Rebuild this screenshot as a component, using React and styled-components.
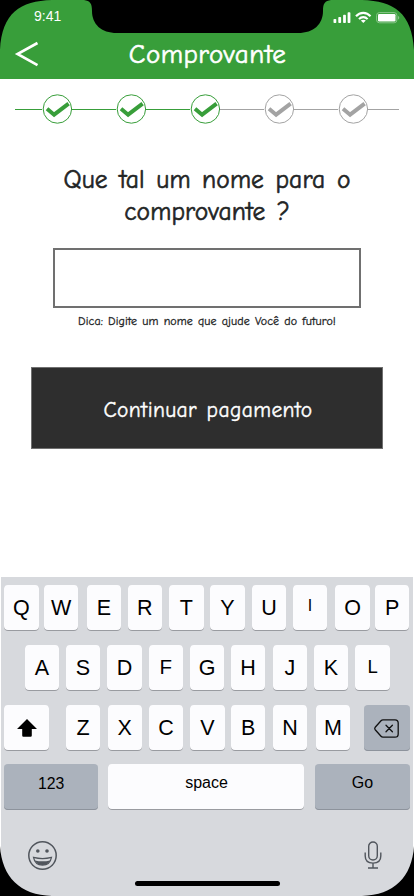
import React from "react";
import styled, { createGlobalStyle } from "styled-components";

const GREEN = "#389e3a";
const GRAY = "#a3a3a3";

const GlobalStyle = createGlobalStyle`
  * { box-sizing: border-box; }
  body { margin: 0; background: #fff; }
`;

const hand = `"Comic Neue", Inter, sans-serif`;

const Screen = styled.div`
  position: relative;
  width: 414px;
  height: 896px;
  overflow: hidden;
  background: #fff;
  display: flex;
  flex-direction: column;
  font-family: "Liberation Sans", sans-serif;
`;

const Header = styled.header`
  height: 79px;
  flex: none;
  background: ${GREEN};
  color: #fff;
`;

const StatusBar = styled.div`
  height: 33px;
  padding: 7px 13px 0 34px;
  display: flex;
  justify-content: space-between;
`;

const Clock = styled.span`
  font-size: 14px;
  line-height: 18px;
`;

const StatusIcons = styled.svg`
  width: 68px;
  height: 14px;
  margin-top: 4px;
`;

const TitleBar = styled.div`
  height: 46px;
  display: grid;
  grid-template-columns: 54px 1fr 53px;
  align-items: center;
`;

const BackButton = styled.button`
  border: 0;
  padding: 0 0 4px 14px;
  background: none;
  display: flex;
`;

const Title = styled.h1`
  margin: 0;
  padding-bottom: 2px;
  text-align: center;
  font: 400 27px/32px ${hand};
  letter-spacing: 0.5px;
  -webkit-text-stroke: 0.6px currentColor;
`;

const Stepper = styled.div`
  height: 30px;
  margin: 15px 15px 0;
  display: flex;
  align-items: center;
`;

const Line = styled.span`
  height: 1px;
  flex: ${(p) => p.$grow} 1 0;
  background: ${(p) => (p.$done ? GREEN : GRAY)};
`;

const StepMark = styled.svg`
  width: 30px;
  height: 30px;
  flex: none;
  color: ${(p) => (p.$done ? GREEN : GRAY)};
`;

const Form = styled.main`
  height: 453px;
  flex: none;
  display: flex;
  flex-direction: column;
  align-items: center;
`;

const Question = styled.h2`
  margin: 40px 0 0;
  color: #222424;
  text-align: center;
  white-space: pre;
  font: 400 25.5px/32px ${hand};
  letter-spacing: 0.1px;
  word-spacing: 2.9px;
  -webkit-text-stroke: 0.6px currentColor;
`;

const NameInput = styled.input`
  width: 308px;
  height: 60px;
  margin: 20px 0 0;
  border: 2px solid #707070;
  border-radius: 0;
  background: #fff;
  outline: none;
`;

const Hint = styled.p`
  margin: 6px 0 1px;
  color: #222424;
  white-space: nowrap;
  font: 400 12px/14px ${hand};
  letter-spacing: 0.1px;
  word-spacing: 1px;
  -webkit-text-stroke: 0.3px currentColor;
`;

const PayButton = styled.button`
  width: 352px;
  height: 82px;
  margin: 38px 1px 0 0;
  padding: 4px 0 0 3px;
  border: 1px solid #707070;
  background: #2e2e2e;
  color: #fff;
  font: 400 21.5px/28px ${hand};
  letter-spacing: 0.4px;
  word-spacing: 2px;
  -webkit-text-stroke: 0.4px currentColor;
`;

const Keyboard = styled.section`
  height: 319px;
  margin: 0 1px;
  padding-top: 8px;
  background: #d7d9dd;
`;

const KeyRow = styled.div`
  height: 46px;
  margin-bottom: ${(p) => p.$after ?? 14}px;
  padding-left: ${(p) => p.$left}px;
  display: flex;
`;

const Key = styled.button`
  width: ${(p) => p.$width ?? 34.4}px;
  height: 46px;
  flex: none;
  margin: 0 ${(p) => p.$gap ?? 0}px 0 0;
  padding: 0 0 ${(p) => p.$lift ?? 0}px;
  border: 0;
  border-radius: 4px;
  display: flex;
  align-items: center;
  justify-content: center;
  background: ${(p) => (p.$dark ? "#abb2bc" : "#fcfcfe")};
  box-shadow: inset 0 -1px 0 ${(p) => (p.$dark ? "#8d939c" : "#999ba0")};
  color: #000;
  font: 400 ${(p) => p.$size ?? 21.5}px/24px "Liberation Sans", sans-serif;
`;

const KeyboardFooter = styled.div`
  height: 44px;
  padding: 0 31px 0 26px;
  display: flex;
  align-items: center;
  justify-content: space-between;
`;

const HomeIndicator = styled.div`
  width: 145px;
  height: 5px;
  margin: 4px auto 0;
  border-radius: 3px;
  background: #000;
`;

const DeviceFrame = styled.svg`
  position: absolute;
  inset: 0;
  pointer-events: none;
`;

function Step({ done }) {
  return (
    <StepMark viewBox="0 0 30 30" fill="none" stroke="currentColor" $done={done}>
      <circle cx="15.4" cy="15" r="14.2" fill="#fff" />
      <path d="M5 14.8 L12.1 20.7 L26.6 9.7" strokeWidth="4" />
    </StepMark>
  );
}

const rows = [
  { left: 3.2, keys: [["Q", 5.4], ["W", 8.3], ["E", 6.6], ["R", 7.2], ["T", 6.6], ["Y", 7.3], ["U", 6.6], ["I", 8.1, 16, 5], ["O", 5.3], ["P", 0]] },
  { left: 23.7, keys: [["A", 6.6], ["S", 7.3], ["D", 6.8], ["F", 7, 20.5, 2], ["G", 6.5], ["H", 7.4], ["J", 6.7], ["K", 7.4], ["L", 0, 18.5, 2]] },
];

const bottomLetters = [["Z", 7.4], ["X", 6.8], ["C", 7], ["V", 6.5], ["B", 7.4], ["N", 8.5], ["M", 13.8]];

function Letters({ keys }) {
  return keys.map(([label, gap, size, lift]) => (
    <Key key={label} $gap={gap} $size={size} $lift={lift}>{label}</Key>
  ));
}

export default function App() {
  return (
    <Screen>
      <GlobalStyle />
      <Header>
        <StatusBar>
          <Clock>9:41</Clock>
          <StatusIcons viewBox="0 0 68 14" fill="#fff">
            <rect x="0.5" y="8" width="2.8" height="4" rx="0.8" />
            <rect x="5.3" y="6" width="2.8" height="6" rx="0.8" />
            <rect x="10.1" y="3.8" width="2.8" height="8.2" rx="0.8" />
            <rect x="14.6" y="1.2" width="2.8" height="10.8" rx="0.8" />
            <g fill="none" stroke="#fff" strokeWidth="2.1">
              <path d="M23 5.3 C27 0.7 33.5 0.7 37.5 5.3" />
              <path d="M26 8.1 C28.4 5.5 32.2 5.5 34.6 8.1" />
            </g>
            <path d="M27.8 9.6 C29.2 8.3 31.4 8.3 32.8 9.6 L30.3 12 Z" />
            <rect x="43.6" y="1.6" width="20.3" height="10.2" rx="2.8" fill="none" stroke="#88c589" />
            <rect x="45" y="3" width="17.5" height="7.4" rx="1.2" />
            <path d="M65 5 C66.7 5.3 66.7 8.2 65 8.5 Z" fill="#88c589" />
          </StatusIcons>
        </StatusBar>
        <TitleBar>
          <BackButton aria-label="Voltar">
            <svg width="26" height="26" viewBox="0 0 26 26" fill="none" stroke="#fff" strokeWidth="2.6">
              <path d="M23.5 2 L3.5 13 L23.5 24.2" />
            </svg>
          </BackButton>
          <Title>Comprovante</Title>
        </TitleBar>
      </Header>
      <Stepper>
        <Line $done $grow={27.3} />
        <Step done />
        <Line $done $grow={44} />
        <Step done />
        <Line $done $grow={44} />
        <Step done />
        <Line $grow={44} />
        <Step />
        <Line $grow={44} />
        <Step />
        <Line $grow={30.9} />
      </Stepper>
      <Form>
        <Question>{"Que tal um nome para o\ncomprovante ?"}</Question>
        <NameInput aria-label="Nome do comprovante" />
        <Hint>Dica: Digite um nome que ajude Você do futuro!</Hint>
        <PayButton>Continuar pagamento</PayButton>
      </Form>
      <Keyboard>
        {rows.map((row) => (
          <KeyRow key={row.left} $left={row.left}>
            <Letters keys={row.keys} />
          </KeyRow>
        ))}
        <KeyRow $left={3.2} $after={13}>
          <Key $width={45} $gap={16.6} aria-label="Shift">
            <svg width="20" height="18" viewBox="0 0 20 18">
              <path d="M10 0 L20 10 H14.8 V16.5 Q14.8 17.7 13.6 17.7 H6.4 Q5.2 17.7 5.2 16.5 V10 H0 Z" />
            </svg>
          </Key>
          <Letters keys={bottomLetters} />
          <Key $dark $width={46} aria-label="Apagar">
            <svg width="25" height="19" viewBox="0 0 25 19" fill="none" stroke="#111" strokeWidth="1.3" strokeLinecap="round" strokeLinejoin="round">
              <path d="M9 .8 H21 Q24.2 .8 24.2 4 V15 Q24.2 18.2 21 18.2 H9 Q7.8 18.2 7 17.3 L1.2 10.7 Q.3 9.5 1.2 8.3 L7 1.7 Q7.8 .8 9 .8Z" />
              <path d="M12 6.2 L18.4 12.8 M18.4 6.2 L12 12.8" />
            </svg>
          </Key>
        </KeyRow>
        <KeyRow $left={3.2} $after={23.4}>
          <Key $dark $width={94} $gap={10.3} $size={15.8} $lift={7}>123</Key>
          <Key $width={196} $gap={10.5} $size={16} $lift={9}>space</Key>
          <Key $dark $width={95} $size={16} $lift={9}>Go</Key>
        </KeyRow>
        <KeyboardFooter>
          <svg width="31" height="31" viewBox="0 0 31 31" fill="none" stroke="#50555c" strokeWidth="1.5">
            <circle cx="15.5" cy="15.5" r="13.7" />
            <g fill="#50555c" stroke="none">
              <circle cx="10.8" cy="11" r="1.8" />
              <circle cx="20" cy="11" r="1.8" />
              <path d="M8 20.4 Q15.5 22.3 23 20.4 Q20.5 25 15.5 25 Q10.5 25 8 20.4Z" />
            </g>
            <path d="M6.5 17.4 Q15.5 19.7 24.5 17.4 Q23 25.2 15.5 25.2 Q8 25.2 6.5 17.4Z" strokeWidth="1.2" />
          </svg>
          <svg width="18" height="28" viewBox="0 0 18 28" fill="none" stroke="#50555c" strokeWidth="1.4">
            <rect x="4.7" y="1" width="8.6" height="18" rx="4.3" />
            <path d="M1.2 11.5 V15 Q1.2 22.1 9 22.1 Q16.8 22.1 16.8 15 V11.5 M9 22 V27 M4 27 H14" />
          </svg>
        </KeyboardFooter>
        <HomeIndicator />
      </Keyboard>
      <DeviceFrame width="414" height="896" viewBox="0 0 414 896">
        <path d="M0 0 H52 C20 1 2 13 0 50 Z M414 0 H362 C394 1 412 13 414 50 Z" />
        <path d="M84 0 C90 1 92 3 92 11 C92 24 101 33 117 33 H298 C314 33 323 24 323 11 C323 3 325 1 331 0 Z" />
        <path d="M0 846 C2 877 20 895 52 896 H0 Z M414 846 C412 877 394 895 362 896 H414 Z" />
      </DeviceFrame>
    </Screen>
  );
}
